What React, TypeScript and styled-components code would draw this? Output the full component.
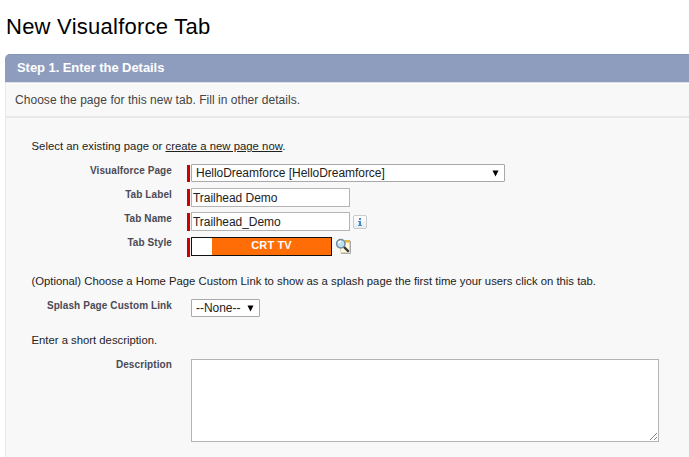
import React from 'react';
import styled, { createGlobalStyle } from 'styled-components';

const GlobalStyle = createGlobalStyle`
  * { box-sizing: border-box; }
  body {
    margin: 0;
    background: #fff;
    font-family: "Liberation Sans", Arial, sans-serif;
    overflow: hidden;
  }
`;

const Page = styled.main`
  height: 457px;
  padding-left: 5px;
  overflow: hidden;
`;

const Title = styled.h1`
  margin: 0;
  height: 54px;
  padding: 14px 0 0 1px;
  font-size: 22px;
  line-height: 26px;
  font-weight: 400;
  letter-spacing: 0.25px;
  color: #000;
  white-space: nowrap;
`;

const Panel = styled.section`
  height: 403px;
`;

const StepHeader = styled.h2`
  margin: 0;
  height: 28px;
  padding-left: 12px;
  border-top: 1px solid #8795b8;
  border-radius: 5px 0 0 0;
  background: #8e9dbe;
  color: #fff;
  font-size: 13px;
  line-height: 26px;
  letter-spacing: -0.06px;
`;

const PanelBody = styled.div`
  height: 375px;
  border-left: 1px solid #e8e8e8;
  border-top: 1px solid #dcdde6;
  background: #f8f8f8;
`;

const Intro = styled.p`
  margin: 0;
  height: 35px;
  padding-left: 9px;
  border-top: 1px solid #fff;
  border-bottom: 2px solid #e8e8e8;
  color: #444;
  font-size: 12px;
  line-height: 33px;
  letter-spacing: 0.04px;
  white-space: nowrap;
`;

const Sentence = styled.p<{ $top: number; $height: number; $spacing?: number }>`
  margin: 0;
  height: ${p => p.$height}px;
  padding: ${p => p.$top}px 0 0 25.5px;
  color: #222;
  font-size: 11.3px;
  line-height: 14px;
  letter-spacing: ${p => p.$spacing ?? 0}px;
  white-space: nowrap;
`;

const PageLink = styled.a`
  color: #222;
  text-decoration: underline;
  cursor: pointer;
`;

const Field = styled.div<{ $height?: number }>`
  display: grid;
  grid-template-columns: 166px 15px 1fr;
  height: ${p => p.$height ?? 24}px;
  align-items: start;
`;

const Label = styled.label`
  text-align: right;
  color: #4a4a56;
  font-size: 10px;
  line-height: 13px;
  font-weight: 700;
  letter-spacing: 0.1px;
  white-space: nowrap;
`;

const Control = styled.div`
  grid-column: 3;
  display: flex;
  align-items: flex-start;
`;

const Required = styled.span<{ $offset?: number; $height?: number }>`
  flex: none;
  width: 3px;
  height: ${p => p.$height ?? 17}px;
  margin: ${p => p.$offset ?? 1}px 1px 0 0;
  background: #c00;
`;

const Spacer = styled.span`
  width: 4px;
  flex: none;
`;

const SelectBox = styled.div<{ $width: number }>`
  display: flex;
  align-items: center;
  justify-content: space-between;
  width: ${p => p.$width}px;
  height: 18px;
  padding: 0 5px 0 4px;
  border: 1px solid #a9a9a9;
  border-radius: 1px;
  background: #fff;
  color: #222;
  font-size: 12px;
  line-height: 16px;
  letter-spacing: -0.04px;
  white-space: nowrap;
`;

const TextInput = styled.input`
  width: 159px;
  height: 19px;
  padding: 0;
  border: 1px solid #b4b4b4;
  border-radius: 0;
  outline: none;
  background: #fff;
  color: #222;
  font: 12px/17px "Liberation Sans", Arial, sans-serif;
  text-indent: 1px;
  letter-spacing: -0.04px;
`;

const InfoButton = styled.button`
  display: grid;
  place-items: center;
  width: 14px;
  height: 14px;
  margin: 3px 0 0 3px;
  padding: 0;
  border: 1px solid #c8cbd0;
  border-radius: 2px;
  background: linear-gradient(#fff, #e9edf1);
`;

const TabStyle = styled.div`
  display: flex;
  width: 141px;
  height: 19px;
  margin-top: 1px;
  border: 1px solid #111;
  background: #ff6d06;
`;

const StyleSwatch = styled.span`
  width: 20px;
  background: #fff;
`;

const StyleName = styled.span`
  flex: 1;
  text-align: center;
  color: #fff;
  font-size: 11px;
  line-height: 15px;
  font-weight: 700;
  letter-spacing: 0.1px;
`;

const LookupIcon = styled.svg`
  margin: 2px 0 0 3px;
`;

const DescriptionArea = styled.div`
  display: flex;
  align-items: flex-end;
  justify-content: flex-end;
  width: 468px;
  height: 83px;
  margin-top: 1px;
  border: 1px solid #b4b4b4;
  background: #fff;
`;

const Arrow = () => (
  <svg width="7" height="7" viewBox="0 0 7 7" aria-hidden="true">
    <path d="M.5.5h6L3.5 6.4z" fill="#000" />
  </svg>
);

const Info = () => (
  <svg width="8" height="10" viewBox="0 0 8 10" aria-hidden="true">
    <path d="M3 1h2v2H3zM2 4h3v4h1v1H2V8h1V5H2z" fill="#4788c8" />
  </svg>
);

const Lookup = () => (
  <LookupIcon width="17" height="17" viewBox="0 0 17 17" aria-hidden="true">
    <path d="M6 15.5h9.5V3" fill="none" stroke="#aaa" />
    <path d="M5.5 2.5h9v12h-9z" fill="#fff8df" stroke="#ddd6bd" />
    <path d="M10 2h5v2.5h-5z" fill="#edb437" />
    <path d="m9 9 4 4" stroke="#333" strokeWidth="2.4" strokeLinecap="round" />
    <circle cx="5.8" cy="5.8" r="4.2" fill="#b9e1f3" stroke="#748999" strokeWidth="1.5" />
    <path d="M3.5 5.5q.3-2 2.5-2" fill="none" stroke="#fff" strokeWidth="1.3" />
  </LookupIcon>
);

const ResizeGrip = () => (
  <svg width="9" height="9" viewBox="0 0 9 9" aria-hidden="true">
    <path d="m1 8 7-7M5 8l3-3" stroke="#858585" />
  </svg>
);

export default function App() {
  return (
    <>
      <GlobalStyle />
      <Page>
        <Title>New Visualforce Tab</Title>
        <Panel>
          <StepHeader>Step 1. Enter the Details</StepHeader>
          <PanelBody>
            <Intro>Choose the page for this new tab. Fill in other details.</Intro>
            <Sentence $top={21} $height={46} $spacing={0.03}>
              Select an existing page or <PageLink>create a new page now</PageLink>.
            </Sentence>
            <Field>
              <Label>Visualforce Page</Label>
              <Control>
                <Required />
                <SelectBox $width={314}>HelloDreamforce [HelloDreamforce]<Arrow /></SelectBox>
              </Control>
            </Field>
            <Field>
              <Label htmlFor="tab-label">Tab Label</Label>
              <Control>
                <Required />
                <TextInput id="tab-label" defaultValue="Trailhead Demo" />
              </Control>
            </Field>
            <Field>
              <Label htmlFor="tab-name">Tab Name</Label>
              <Control>
                <Required $height={18} />
                <TextInput id="tab-name" defaultValue="Trailhead_Demo" />
                <InfoButton aria-label="Information"><Info /></InfoButton>
              </Control>
            </Field>
            <Field $height={38}>
              <Label>Tab Style</Label>
              <Control>
                <Required $offset={2} $height={19} />
                <TabStyle><StyleSwatch /><StyleName>CRT TV</StyleName></TabStyle>
                <Lookup />
              </Control>
            </Field>
            <Sentence $top={0} $height={25}>
              (Optional) Choose a Home Page Custom Link to show as a splash page the first time your users click on this tab.
            </Sentence>
            <Field $height={34}>
              <Label>Splash Page Custom Link</Label>
              <Control><Spacer /><SelectBox $width={69}>--None--<Arrow /></SelectBox></Control>
            </Field>
            <Sentence $top={0} $height={25}>Enter a short description.</Sentence>
            <Field $height={90}>
              <Label>Description</Label>
              <Control><Spacer /><DescriptionArea role="textbox" aria-label="Description"><ResizeGrip /></DescriptionArea></Control>
            </Field>
          </PanelBody>
        </Panel>
      </Page>
    </>
  );
}
